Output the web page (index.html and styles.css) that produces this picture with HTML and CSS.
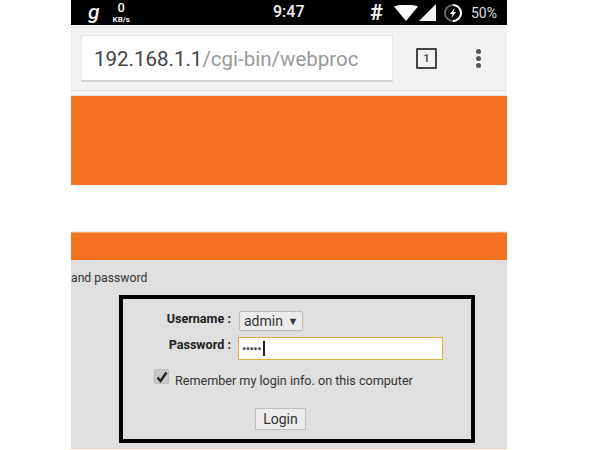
FILE: index.html
```html
<!DOCTYPE html>
<html lang="en">
<head>
    <meta charset="UTF-8">
    <title>192.168.1.1/cgi-bin/webproc</title>
    <link rel="stylesheet" href="styles.css">
</head>
<body>
    <div class="phone">
        <div class="status-bar">
            <div class="status-left">
                <span class="net-g">g</span>
                <span class="net-speed"><b>0</b><small>KB/s</small></span>
            </div>
            <span class="clock">9:47</span>
            <div class="status-right">
                <span class="hash">#</span>
                <svg class="wifi" width="24" height="16" viewBox="0 0 24 16"><path d="M0 1.5C7-1 17-1 24 1.5L12 16Z" fill="#fff"/></svg>
                <svg class="signal" width="17" height="17" viewBox="0 0 17 17"><path d="M17 0V17H0Z" fill="#f2f2f2"/></svg>
                <svg class="battery" width="20" height="20" viewBox="0 0 20 20">
                    <circle cx="10" cy="10" r="8" fill="none" stroke="#666" stroke-width="2"/>
                    <path d="M10 2A8 8 0 0 1 10 18" fill="none" stroke="#fff" stroke-width="2"/>
                    <path d="M11.5 5L7 11H9.5L8.5 15L13 9H10.5Z" fill="#fff"/>
                </svg>
                <span class="percent">50%</span>
            </div>
        </div>

        <div class="toolbar">
            <div class="omnibox"><span class="host">192.168.1.1</span><span class="path">/cgi-bin/webproc</span></div>
            <span class="tab-count">1</span>
            <div class="menu-dots"><i></i><i></i><i></i></div>
        </div>
        <div class="toolbar-edge"></div>

        <div class="banner"></div>
        <div class="gap"></div>
        <div class="title-bar"></div>

        <main class="content">
            <p class="hint">and password</p>
            <form class="login-box">
                <div class="field-row">
                    <label class="field-label">Username :</label>
                    <div class="fake-select">admin <span class="arrow">▼</span></div>
                </div>
                <div class="field-row password-row">
                    <label class="field-label">Password :</label>
                    <div class="fake-input"><span class="dots">•••••</span><span class="caret"></span></div>
                </div>
                <div class="remember">
                    <span class="checkbox">
                        <svg width="12" height="12" viewBox="0 0 12 12"><path d="M1.5 6.5L4.5 10L10.5 1.5" fill="none" stroke="#222" stroke-width="2.4"/></svg>
                    </span>
                    <span class="remember-text">Remember my login info. on this computer</span>
                </div>
                <div class="actions"><span class="login-btn">Login</span></div>
            </form>
        </main>
    </div>
</body>
</html>
```

FILE: styles.css
```css
* { margin: 0; padding: 0; box-sizing: border-box; }
body {
    background: #fff;
    font-family: Roboto, "Liberation Sans", sans-serif;
    color: #333;
    overflow: hidden;
}
.phone { width: 436px; margin-left: 71px; height: 450px; overflow: hidden; }

/* status bar */
.status-bar {
    height: 25px;
    background: #000;
    color: #f2f2f2;
    display: flex;
    align-items: center;
    justify-content: space-between;
    position: relative;
}
.status-left { display: flex; align-items: flex-start; height: 25px; padding-left: 17px; gap: 11px; }
.net-g { font-size: 21px; font-style: italic; font-weight: 500; line-height: 25px; padding-right: 2px; }
.net-speed { display: flex; flex-direction: column; align-items: center; }
.net-speed b { font-size: 13px; font-weight: 500; line-height: 15px; }
.net-speed small { font-size: 8px; font-weight: 700; line-height: 10px; }
.clock { position: absolute; left: 202px; top: 1px; font-size: 16px; font-weight: 500; line-height: 22px; }
.status-right { display: flex; align-items: center; padding-right: 10px; }
.hash { font-size: 22px; font-weight: 700; margin-right: 11px; }
.wifi { margin-right: 1px; }
.signal { margin-right: 7px; }
.battery { margin-right: 8px; }
.percent { font-size: 14px; color: #ddd; }

/* browser toolbar */
.toolbar {
    height: 65px;
    background: #f2f2f2;
    display: flex;
    align-items: center;
    padding: 2px 0 0 10px;
}
.omnibox {
    width: 312px;
    height: 47px;
    background: #fff;
    border: 1px solid #e6e6e6;
    border-bottom: 2px solid #d2d2d2;
    padding-left: 12px;
    font-size: 20.5px;
    line-height: 47px;
    white-space: nowrap;
}
.host { color: #444; }
.path { color: #999; }
.tab-count {
    width: 21px;
    height: 21px;
    margin-left: 23px;
    border: 2px solid #444;
    border-radius: 1px;
    font-size: 11px;
    font-weight: 700;
    text-align: center;
    line-height: 17px;
    color: #555;
}
.menu-dots { margin-left: 39px; display: flex; flex-direction: column; gap: 2px; }
.menu-dots i { width: 5px; height: 5px; border-radius: 50%; background: #555; display: block; }
.toolbar-edge { height: 6px; background: #f4f4f4; border-top: 1px solid #dcdcdc; border-bottom: 1px solid #d8e4e4; }

/* page */
.banner { height: 89px; background: #f47321; }
.gap { height: 47px; background: #fff; border-bottom: 1px solid #eee; }
.title-bar { height: 28px; background: #f47321; border-top: 1px solid #f9a56c; }
.content { background: #dfdfdf; height: 189px; border-bottom: 1px solid #eecdb8; }
.hint { font-size: 12.2px; line-height: 14px; padding-top: 11px; color: #333; }
.login-box {
    width: 356px;
    height: 148px;
    margin: 10px 0 0 48px;
    border: 4px solid #000;
    padding-top: 12px;
}
.field-row { display: flex; align-items: flex-start; }
.field-label {
    width: 108px;
    text-align: right;
    font-size: 12.6px;
    font-weight: 700;
    line-height: 15px;
    color: #222;
}
.fake-select {
    width: 64px;
    height: 20px;
    margin-left: 8px;
    background: #ececec;
    border: 1px solid #bbb;
    border-radius: 2px;
    font-size: 14px;
    line-height: 18px;
    padding-left: 4px;
    color: #333;
    white-space: nowrap;
}
.arrow { font-size: 11px; vertical-align: 1px; margin-left: 1px; }
.password-row { margin-top: 6px; }
.fake-input {
    width: 205px;
    height: 23px;
    margin-left: 7px;
    background: #fff;
    border: 1px solid #e0b040;
    display: flex;
    align-items: center;
    padding-left: 3px;
}
.dots { font-size: 13px; letter-spacing: -0.6px; color: #444; }
.caret { width: 2px; height: 15px; background: #222; margin-left: 2px; }
.remember {
    display: flex;
    align-items: flex-start;
    margin: 9px 0 0 31px;
    color: #333;
}
.remember-text { font-size: 12.6px; line-height: 16px; margin-top: 4px; }
.checkbox {
    width: 15px;
    height: 15px;
    background: #c9c9c9;
    border: 1px solid #bbb;
    border-radius: 2px;
    margin-right: 6px;
    display: flex;
    align-items: center;
    justify-content: center;
}
.actions { margin: 19px 0 0 132px; }
.login-btn {
    display: block;
    width: 51px;
    height: 22px;
    background: #ececec;
    border: 1px solid #c0c0c0;
    font-size: 14px;
    line-height: 20px;
    text-align: center;
    color: #333;
}
```
